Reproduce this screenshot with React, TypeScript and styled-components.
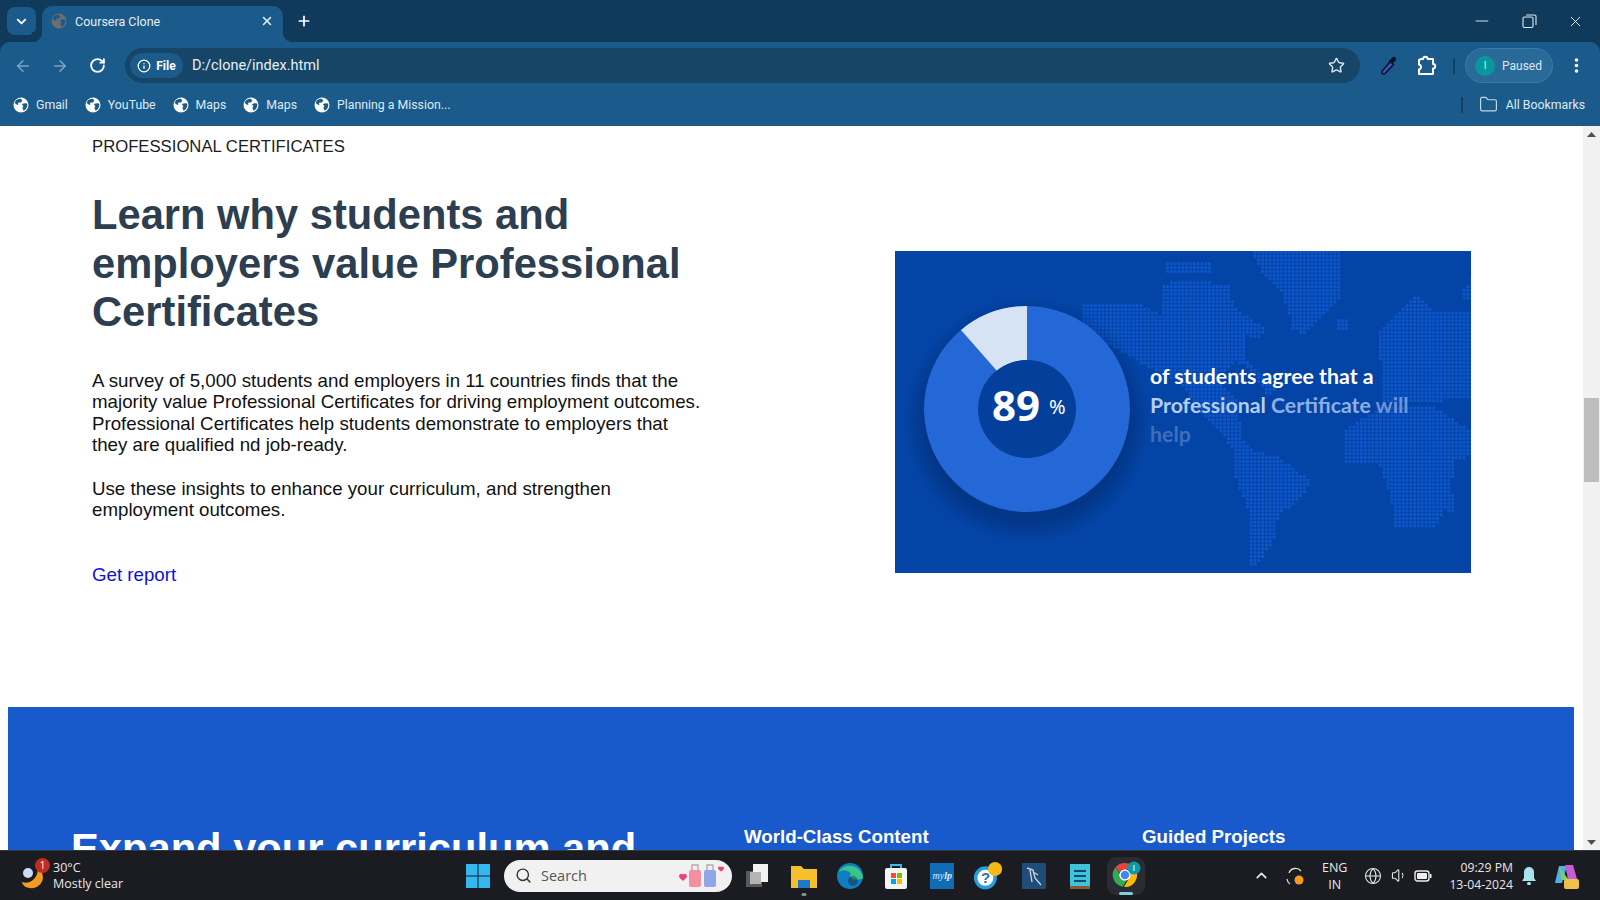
import { createGlobalStyle, styled } from "styled-components";
import { ArrowLeft, ArrowRight, ChevronDown, ChevronUp, EllipsisVertical, Folder, Globe, Info, Minus, Plus, RotateCw, Search, Star, Volume1, X } from "lucide-react";

const uiFont = `"Roboto", "Liberation Sans", sans-serif`;

const Global = createGlobalStyle`
  html, body { margin: 0; height: 100%; overflow: hidden; background: #fff; }
  body { font-family: "Liberation Sans", Arial, sans-serif; }
`;

const Screen = styled.div`
  width: 1600px;
  height: 900px;
  display: flex;
  flex-direction: column;
  overflow: hidden;
  background: #0f3a5c;
`;

const TabStrip = styled.div`
  height: 42px;
  flex: none;
  background: #0f3a5c;
  display: flex;
  align-items: flex-end;
  padding-left: 7px;
  color: #fff;
`;

const TabMenu = styled.div`
  width: 29px;
  height: 28px;
  margin-bottom: 7px;
  border-radius: 8px;
  background: #1a5b8c;
  display: flex;
  align-items: center;
  justify-content: center;
`;

const Tab = styled.div`
  position: relative;
  width: 241px;
  height: 36px;
  margin-left: 6px;
  border-radius: 10px 10px 0 0;
  background: #1a5b8c;
  display: flex;
  align-items: center;
  padding: 0 9px 6px 9px;
  box-sizing: border-box;
  font: 12.5px ${uiFont};
  color: #e6eef5;

  &::before,
  &::after {
    content: "";
    position: absolute;
    bottom: 0;
    width: 10px;
    height: 10px;
  }
  &::before {
    left: -10px;
    background: radial-gradient(circle at 0 0, #0f3a5c 10px, #1a5b8c 10.5px);
  }
  &::after {
    right: -10px;
    background: radial-gradient(circle at 100% 0, #0f3a5c 10px, #1a5b8c 10.5px);
  }
`;

const TabTitle = styled.span`
  flex: 1;
  margin-left: 8px;
`;

const NewTab = styled.div`
  margin: 0 0 13px 13px;
  display: flex;
`;

const WindowButtons = styled.div`
  margin-left: auto;
  margin-bottom: 11px;
  display: flex;
  align-items: center;
  gap: 30px;
  padding-right: 16px;
`;

const Toolbar = styled.div`
  height: 47px;
  flex: none;
  background: #1a5b8c;
  border-radius: 10px 10px 0 0;
  display: flex;
  align-items: center;
  padding-left: 14px;
  color: #fff;
`;

const NavIcon = styled.span<{ $dim?: boolean }>`
  display: flex;
  justify-content: center;
  width: 18px;
  margin-right: 19px;
  color: ${(p) => (p.$dim ? "#7da3c0" : "#fff")};
`;

const Omnibox = styled.div`
  width: 1235px;
  height: 35px;
  border-radius: 18px;
  background: #174567;
  display: flex;
  align-items: center;
  padding: 0 15px 0 5px;
  box-sizing: border-box;
`;

const FileChip = styled.div`
  height: 25px;
  width: 53px;
  border-radius: 13px;
  background: #1a5b8c;
  display: flex;
  align-items: center;
  justify-content: center;
  gap: 5px;
  font: 700 12px ${uiFont};
`;

const Url = styled.span`
  flex: 1;
  margin-left: 9px;
  font: 14.5px ${uiFont};
  color: #e8f0f6;
`;

const ToolGroup = styled.div`
  display: flex;
  align-items: center;
  flex: 1;
`;

const Dropper = styled.svg`
  margin-left: 17px;
`;

const PuzzleIcon = styled.svg`
  margin-left: 12px;
  margin-right: 16px;
`;

const Divider = styled.span`
  width: 2px;
  height: 16px;
  background: #12405f;
`;

const Profile = styled.div`
  width: 88px;
  height: 35px;
  margin-left: 10px;
  border-radius: 18px;
  border: 1px solid #3b7aa6;
  background: #2a6a99;
  box-sizing: border-box;
  display: flex;
  align-items: center;
  padding-left: 9px;
  gap: 7px;
  font: 12px ${uiFont};
  color: #dbe8f2;
`;

const Avatar = styled.span`
  width: 20px;
  height: 20px;
  border-radius: 50%;
  background: #08979c;
  display: flex;
  align-items: center;
  justify-content: center;
  font-size: 10px;
`;

const MenuDots = styled.span`
  display: flex;
  margin-left: 14px;
`;

const BookmarkBar = styled.div`
  height: 37px;
  flex: none;
  background: #1a5b8c;
  display: flex;
  align-items: center;
  padding: 0 15px 6px 13px;
  box-sizing: border-box;
  font: 12.3px ${uiFont};
  color: #dfeaf3;
`;

const Bookmark = styled.span`
  display: flex;
  align-items: center;
  gap: 7px;
  margin-right: 17px;
`;

const BookmarkEnd = styled.span`
  margin-left: auto;
  display: flex;
  align-items: center;
  gap: 8px;
`;

const EndDivider = styled(Divider)`
  margin-right: 8px;
`;

const Viewport = styled.div`
  flex: 1;
  min-height: 0;
  display: flex;
  overflow: hidden;
  background: #fff;
`;

const Page = styled.div`
  flex: 1;
  min-width: 0;
  overflow: hidden;
`;

const Scrollbar = styled.div`
  width: 17px;
  flex: none;
  background: #f1f1f1;
  display: flex;
  flex-direction: column;
  align-items: center;
`;

const ScrollThumb = styled.div`
  width: 15px;
  height: 84px;
  margin-top: 256px;
  background: #bdbdbd;
`;

const ScrollStart = styled.div`
  display: flex;
  height: 16px;
  align-items: center;
`;

const ScrollEnd = styled(ScrollStart)`
  margin-top: auto;
`;

const Section = styled.section`
  height: 581px;
  padding: 9px 0 0 92px;
  box-sizing: border-box;
  display: flex;
  gap: 191px;
`;

const Copyblock = styled.div`
  width: 612px;
`;

const Eyebrow = styled.div`
  font-size: 16.7px;
  line-height: 24px;
  color: #1c1c1c;
`;

const Heading = styled.h2`
  margin: 32px 0 0;
  font-size: 41.7px;
  line-height: 48.5px;
  font-weight: 700;
  color: #2c3e50;
`;

const Body = styled.p`
  margin: 0;
  font-size: 18.72px;
  line-height: 21.6px;
  color: #111;
`;

const Intro = styled(Body)`
  margin-top: 33px;
`;

const Insights = styled(Body)`
  margin-top: 22px;
`;

const ReportLink = styled.a`
  display: block;
  margin-top: 42px;
  font-size: 18.72px;
  line-height: 24px;
  color: #1010d8;
`;

const Promo = styled.div`
  width: 576px;
  height: 322px;
  margin-top: 116px;
  flex: none;
`;

const Band = styled.section`
  margin-left: 8px;
  width: 1566px;
  height: 300px;
  background: #185acb;
  color: #fff;
  display: grid;
  grid-template-columns: 673px 398px 1fr;
  padding: 120px 0 0 63px;
  box-sizing: border-box;
`;

const BandTitle = styled.h2`
  margin: -2px 0 0;
  font-size: 41.7px;
  line-height: 48px;
  font-weight: 700;
`;

const BandLabel = styled.h3`
  margin: -2px 0 0;
  font-size: 18.72px;
  line-height: 24px;
  font-weight: 700;
`;

const Taskbar = styled.div`
  height: 50px;
  flex: none;
  background: #1b1c22;
  border-top: 1px solid #34363c;
  box-sizing: border-box;
  display: grid;
  grid-template-columns: 1fr auto 1fr;
  align-items: center;
  padding: 0 20px 0 20px;
  color: #e8e8e8;
  font: 12.5px "Open Sans", sans-serif;
`;

const Weather = styled.div`
  display: flex;
  align-items: center;
  gap: 7px;
  line-height: 16px;
`;

const WeatherBadge = styled.span`
  position: absolute;
  top: -4px;
  right: -4px;
  width: 15px;
  height: 15px;
  border-radius: 50%;
  background: #c42b1c;
  color: #fff;
  font-size: 10px;
  line-height: 15px;
  text-align: center;
`;

const WeatherIcon = styled.span`
  position: relative;
  display: flex;
`;

const TaskCenter = styled.div`
  display: flex;
  align-items: center;
  gap: 16px;
  padding: 0 2px 0 8px;
`;

const TaskSearch = styled.div`
  width: 228px;
  height: 32px;
  border-radius: 16px;
  background: #f1f1f1;
  color: #333;
  display: flex;
  align-items: center;
  gap: 9px;
  padding: 0 8px 0 11px;
  box-sizing: border-box;
  font-size: 14.5px;
  margin: 0 -5px 0 -3px;
`;

const SearchLabel = styled.span`
  flex: 1;
  color: #555;
`;

const TaskApp = styled.span<{ $active?: boolean }>`
  position: relative;
  width: 30px;
  height: 30px;
  display: flex;
  align-items: center;
  justify-content: center;
  ${(p) => p.$active && "background: #2b2c32; border-radius: 5px; outline: 4px solid #2b2c32;"}
`;

const AppMarker = styled.span<{ $active?: boolean }>`
  position: absolute;
  bottom: ${(p) => (p.$active ? "-4px" : "-5px")};
  left: 50%;
  transform: translateX(-50%);
  width: ${(p) => (p.$active ? "14px" : "5px")};
  height: 3px;
  border-radius: 2px;
  background: ${(p) => (p.$active ? "#7fd2dc" : "#8b8b8b")};
`;

const Tray = styled.div`
  justify-self: end;
  display: flex;
  align-items: center;
`;

const TrayItem = styled.span<{ $gap: number }>`
  display: flex;
  margin-left: ${(p) => p.$gap}px;
`;

const TrayText = styled.span<{ $gap: number }>`
  margin-left: ${(p) => p.$gap}px;
  text-align: center;
  line-height: 17px;
  font-size: 12.5px;
`;

const Clock = styled(TrayText)`
  text-align: right;
  font-size: 12.2px;
`;

const GlobeMark = ({ color = "#fff", hole = "#1a5b8c" }: { color?: string; hole?: string }) => (
  <svg width="16" height="16" viewBox="0 0 16 16">
    <circle cx="8" cy="8" r="7.5" fill={color} />
    <path d="M3 3.2C4.2 2.2 6 1.6 7.6 1.7L9.4 3.4 7.8 5.4 5 5.8 5.4 8 3.6 7.4 1.8 6C2 5 2.4 4 3 3.2z" fill={hole} />
    <path d="M14.2 6.4C14.6 8.6 14 10.8 12.4 12.4L10.6 13.8 9.4 11 10.4 9 8.8 7.6 11 6.2z" fill={hole} />
  </svg>
);

const ScrollArrow = ({ up }: { up?: boolean }) => (
  <svg width="9" height="5" viewBox="0 0 9 5">
    <path d={up ? "M0 5L4.5 0 9 5z" : "M0 0L4.5 5 9 0z"} fill="#505050" />
  </svg>
);

const bookmarks = ["Gmail", "YouTube", "Maps", "Maps", "Planning a Mission..."];

type Pt = [number, number];

// continents, traced in promo pixels * 3 around the right half of the card
const continents: Pt[][] = [
  [[-60, 160], [100, 155], [175, 190], [175, 100], [240, 85], [380, 100], [395, 170], [490, 230], [470, 260], [430, 250], [430, 320], [520, 410], [500, 440], [440, 350], [400, 330], [340, 380], [400, 440], [420, 560], [460, 610], [400, 600], [340, 530], [280, 470], [240, 400], [-60, 240]],
  [[190, 30], [330, 30], [330, 70], [190, 70]],
  [[450, 0], [710, 0], [710, 140], [600, 250], [570, 230], [540, 120], [480, 60]],
  [[700, 210], [735, 200], [735, 235], [700, 235]],
  [[400, 600], [520, 610], [630, 690], [590, 750], [530, 790], [510, 880], [470, 930], [440, 950], [440, 780], [400, 680]],
  [[730, 530], [840, 470], [1000, 470], [1110, 540], [1110, 610], [1060, 630], [1040, 750], [1000, 830], [880, 830], [860, 720], [830, 640], [730, 630]],
  [[840, 450], [830, 240], [940, 130], [1000, 180], [1110, 180], [1110, 440], [1000, 450]],
  [[1040, 730], [1055, 730], [1055, 785], [1035, 785]],
  [[1075, 120], [1110, 80], [1110, 150], [1075, 150]],
];

const inside = (x: number, y: number, poly: Pt[]) => {
  let hit = false;
  for (let i = 0, j = poly.length - 1; i < poly.length; j = i++) {
    const [xi, yi] = poly[i];
    const [xj, yj] = poly[j];
    if (yi > y !== yj > y && x < ((xj - xi) * (y - yi)) / (yj - yi) + xi) hit = !hit;
  }
  return hit;
};

const mapDots: Pt[] = [];
for (let x = 180; x < 576; x += 3.8) {
  for (let y = 0; y < 322; y += 3.8) {
    const px = (x - 206) * 3;
    const py = (y + 1) * 3;
    if (continents.some((c) => inside(px, py, c))) mapDots.push([x, y]);
  }
}

const PromoGraphic = () => (
  <svg width="576" height="322" viewBox="0 0 576 322">
    <defs>
      <radialGradient id="shade" cx="0.5" cy="0.5" r="0.5">
        <stop offset="0.8" stopColor="#00245f" stopOpacity="0.45" />
        <stop offset="1" stopColor="#00245f" stopOpacity="0" />
      </radialGradient>
    </defs>
    <rect width="576" height="322" fill="#0444a7" />
    <g fill="#0e56ca">
      {mapDots.map(([x, y]) => (
        <rect key={`${x}-${y}`} x={x} y={y} width={2.8} height={2.8} />
      ))}
    </g>
    <circle cx="132" cy="169" r="124" fill="url(#shade)" />
    <circle cx="132" cy="158" r="103" fill="#2368d6" />
    <path d="M132 55 L132 109 A49 49 0 0 0 102 120 L66 79 A103 103 0 0 1 132 55Z" fill="#d5e3f4" />
    <circle cx="132" cy="158" r="49" fill="#053f9c" />
    <text x="97" y="170" fill="#fff" fontFamily="Noto Sans" fontWeight="700" fontSize="42">89</text>
    <text x="154" y="163" fill="#fff" fontFamily="Noto Sans" fontSize="20">%</text>
    <g fontFamily="Lato" fontWeight="700" fontSize="21.3">
      <text x="255" y="133" fill="#fff">of students agree that a</text>
      <text x="255" y="162" fill="#b4cdf0">
        Professional <tspan fill="#8cafe6">Certificate</tspan> <tspan fill="#6d95d8">will</tspan>
      </text>
      <text x="255" y="191" fill="#3f6fbb">help</text>
    </g>
  </svg>
);

const TaskIcon = ({ name }: { name: string }) => {
  switch (name) {
    case "start":
      return (
        <svg width="26" height="26" viewBox="0 0 26 26">
          <path d="M1 1h11.5v11.5H1zM13.5 1H25v11.5H13.5zM1 13.5h11.5V25H1zM13.5 13.5H25V25H13.5z" fill="#35b8f0" />
        </svg>
      );
    case "files":
      return (
        <svg width="28" height="28" viewBox="0 0 28 28">
          <path d="M1 4h10l3 3h13v19H1z" fill="#f5c02c" />
          <rect x="8" y="18" width="12" height="8" fill="#1e79c8" />
        </svg>
      );
    case "edge":
      return (
        <svg width="28" height="28" viewBox="0 0 28 28">
          <circle cx="14" cy="14" r="13" fill="#0f7ec2" />
          <path d="M3 10C7 1 25 1 27 16c-5 3-12 2-13-2 3-4-6-8-11-4z" fill="#39c48a" />
          <circle cx="17" cy="19" r="5" fill="#1b1c22" opacity="0.4" />
        </svg>
      );
    case "store":
      return (
        <svg width="26" height="28" viewBox="0 0 26 28">
          <path d="M8 6V3h10v3" fill="none" stroke="#4ab3e8" strokeWidth="2" />
          <rect x="2" y="6" width="22" height="21" rx="2" fill="#f4f4f4" />
          <path d="M8 11h5v5H8z" fill="#f25022" />
          <path d="M14 11h5v5h-5z" fill="#7fba00" />
          <path d="M8 17h5v5H8z" fill="#00a4ef" />
          <path d="M14 17h5v5h-5z" fill="#ffb900" />
        </svg>
      );
    case "mylp":
      return (
        <svg width="26" height="28" viewBox="0 0 26 28">
          <rect x="1" y="1" width="24" height="26" fill="#0f6cb5" />
          <text x="3.5" y="17" fontFamily="Liberation Serif" fontStyle="italic" fill="#d8eefc" fontSize="10">my<tspan fontWeight="700">lp</tspan></text>
        </svg>
      );
    case "help":
      return (
        <svg width="34" height="34" viewBox="0 0 34 34">
          <circle cx="14" cy="19" r="13" fill="#2b9be0" />
          <circle cx="14" cy="19" r="9" fill="#fff" />
          <text x="9" y="25" fontFamily="Liberation Sans" fontWeight="700" fontSize="17" fill="#1d75b8">?</text>
          <circle cx="25" cy="9" r="8" fill="#f7b918" />
        </svg>
      );
    case "mysql":
      return (
        <svg width="26" height="28" viewBox="0 0 26 28">
          <rect x="1" y="1" width="24" height="26" rx="1" fill="#1d4d78" />
          <path d="M6 6l6 2 2 8 6 7M9 8l2 12M12 10l5 3" fill="none" stroke="#c7d3de" strokeWidth="1.4" />
        </svg>
      );
    case "notes":
      return (
        <svg width="24" height="28" viewBox="0 0 24 28">
          <rect x="2" y="2" width="20" height="25" fill="#3ec3da" />
          <rect x="2" y="24" width="20" height="3" fill="#8a5a33" />
          <path d="M6 9h12M6 14h12M6 19h12" stroke="#114a6e" strokeWidth="2" />
        </svg>
      );
    default:
      return (
        <svg width="30" height="30" viewBox="0 0 30 30">
          <path d="M14 2a12 12 0 0 1 10.4 6H14a6 6 0 0 0-5.6 3.8L4.6 6.2A12 12 0 0 1 14 2z" fill="#e8453c" />
          <path d="M4.6 6.2l5.3 9.2a6 6 0 0 0 5.5 4.4L11.7 25.8A12 12 0 0 1 4.6 6.2z" fill="#34a853" />
          <path d="M24.4 8A12 12 0 0 1 13 26l5.2-9A6 6 0 0 0 19 10z" fill="#fbbc05" />
          <circle cx="14" cy="14" r="5" fill="#4285f4" stroke="#fff" strokeWidth="1.5" />
          <circle cx="23" cy="7" r="6.5" fill="#0c9aa6" />
          <rect x="22.5" y="4" width="1" height="6" fill="#fff" />
        </svg>
      );
  }
};

const App = () => (
  <Screen>
    <Global />
    <TabStrip>
      <TabMenu><ChevronDown size={15} strokeWidth={3} /></TabMenu>
      <Tab>
        <GlobeMark color="#6f6d70" />
        <TabTitle>Coursera Clone</TabTitle>
        <X size={14} strokeWidth={2.6} />
      </Tab>
      <NewTab><Plus size={16} strokeWidth={2.6} /></NewTab>
      <WindowButtons>
        <Minus size={20} strokeWidth={1} />
        <svg width="15" height="16" viewBox="0 0 15 16" fill="none" stroke="#dfe8ef" strokeWidth="1.1">
          <rect x="1" y="4" width="10" height="10.5" rx="1.5" />
          <path d="M4 2h8.5A1.5 1.5 0 0 1 14 3.5V12" />
        </svg>
        <X size={17} strokeWidth={1.2} />
      </WindowButtons>
    </TabStrip>
    <Toolbar>
      <NavIcon $dim><ArrowLeft size={18} /></NavIcon>
      <NavIcon $dim><ArrowRight size={18} /></NavIcon>
      <NavIcon><RotateCw size={17} strokeWidth={2.6} /></NavIcon>
      <Omnibox>
        <FileChip><Info size={14} strokeWidth={2.2} />File</FileChip>
        <Url>D:/clone/index.html</Url>
        <Star size={17} color="#dbe6ee" strokeWidth={2} />
      </Omnibox>
      <ToolGroup>
        <Dropper width="24" height="24" viewBox="0 0 24 24">
          <path d="M13.5 7.5l3 3-8 8.5c-1 1-2.4 1.3-3.2.5s-.6-2 .4-3z" fill="#4a4fc6" stroke="#07142c" strokeWidth="1.6" />
          <path d="M11.5 6.5l2-1 1.6-2c1-1 2.6-.8 3.4 0s1 2.4 0 3.4l-2 1.6-1 2z" fill="#07142c" />
        </Dropper>
        <PuzzleIcon width="24" height="24" viewBox="0 0 24 24">
          <path d="M8 5h2.2a2.2 2.2 0 0 1 4.4 0H20v5a2 2 0 0 1 0 4.4V20H6v-4.5a2.6 2.6 0 0 0 2-2.5 2.6 2.6 0 0 0-2-2.5V6z" fill="none" stroke="#fff" strokeWidth="2" strokeLinejoin="round" />
        </PuzzleIcon>
        <Divider />
        <Profile><Avatar>I</Avatar>Paused</Profile>
        <MenuDots><EllipsisVertical size={19} strokeWidth={2.6} /></MenuDots>
      </ToolGroup>
    </Toolbar>
    <BookmarkBar>
      {bookmarks.map((b, i) => (
        <Bookmark key={i}><GlobeMark />{b}</Bookmark>
      ))}
      <BookmarkEnd>
        <EndDivider />
        <Folder size={19} color="#c4d6e4" strokeWidth={1.5} />
        {"All Bookmarks"}
      </BookmarkEnd>
    </BookmarkBar>
    <Viewport>
      <Page>
        <Section>
          <Copyblock>
            <Eyebrow>PROFESSIONAL CERTIFICATES</Eyebrow>
            <Heading>Learn why students and employers value Professional Certificates</Heading>
            <Intro>
              A survey of 5,000 students and employers in 11 countries finds that the majority value Professional Certificates for driving employment outcomes. Professional Certificates help students demonstrate to employers that they are qualified nd job-ready.
            </Intro>
            <Insights>Use these insights to enhance your curriculum, and strengthen employment outcomes.</Insights>
            <ReportLink>Get report</ReportLink>
          </Copyblock>
          <Promo><PromoGraphic /></Promo>
        </Section>
        <Band>
          <BandTitle>Expand your curriculum and</BandTitle>
          <BandLabel>World-Class Content</BandLabel>
          <BandLabel>Guided Projects</BandLabel>
        </Band>
      </Page>
      <Scrollbar>
        <ScrollStart><ScrollArrow up /></ScrollStart>
        <ScrollThumb />
        <ScrollEnd><ScrollArrow /></ScrollEnd>
      </Scrollbar>
    </Viewport>
    <Taskbar>
      <Weather>
        <WeatherIcon>
          <svg width="26" height="28" viewBox="0 0 26 28">
            <path d="M18 6a11 11 0 0 1-8 20C5 26 2 22 2 20c7 3 16-3 16-14z" fill="#f59a23" />
            <circle cx="8" cy="11" r="5" fill="#c9dcf2" />
          </svg>
          <WeatherBadge>1</WeatherBadge>
        </WeatherIcon>
        <div>30°C<br />Mostly clear</div>
      </Weather>
      <TaskCenter>
        <TaskIcon name="start" />
        <TaskSearch>
          <Search size={17} strokeWidth={2} />
          <SearchLabel>Search</SearchLabel>
          <svg width="46" height="28" viewBox="0 0 46 28">
            <path d="M1 14a2.4 2.4 0 0 1 4-1.5A2.4 2.4 0 0 1 9 14c0 2-2.5 3.5-4 5-1.5-1.5-4-3-4-5z" fill="#e8447a" />
            <path d="M14 8V3h6v5M29 8V3h6v5" fill="none" stroke="#b9a8b0" strokeWidth="1.4" />
            <rect x="11" y="8" width="12" height="17" rx="2" fill="#f28fa0" />
            <rect x="26" y="8" width="12" height="17" rx="2" fill="#8fa6e8" />
            <path d="M40 6a1.8 1.8 0 0 1 3-1 1.8 1.8 0 0 1 3 1c0 1.5-1.8 2.500-3 3.500-1.200-1-3-2-3-3.500z" fill="#e8447a" />
          </svg>
        </TaskSearch>
        <TaskApp>
          <svg width="26" height="26" viewBox="0 0 26 26">
            <rect x="1" y="8" width="16" height="16" fill="#5a5a5a" />
            <rect x="8" y="1" width="15" height="18" fill="#f2f2f2" />
            <rect x="5" y="9" width="11" height="12" fill="#b4b4b4" />
          </svg>
        </TaskApp>
        <TaskApp><TaskIcon name="files" /><AppMarker /></TaskApp>
        <TaskApp><TaskIcon name="edge" /></TaskApp>
        <TaskApp><TaskIcon name="store" /></TaskApp>
        <TaskApp><TaskIcon name="mylp" /></TaskApp>
        <TaskApp><TaskIcon name="help" /></TaskApp>
        <TaskApp><TaskIcon name="mysql" /></TaskApp>
        <TaskApp><TaskIcon name="notes" /></TaskApp>
        <TaskApp $active><TaskIcon name="chrome" /><AppMarker $active /></TaskApp>
      </TaskCenter>
      <Tray>
        <ChevronUp size={17} strokeWidth={2.4} />
        <TrayItem $gap={14}>
          <svg width="22" height="22" viewBox="0 0 22 22">
            <path d="M5 8a7 7 0 0 1 12-2M6 19a7 7 0 0 1-3-5" fill="none" stroke="#ddd" strokeWidth="1.3" />
            <circle cx="15" cy="15" r="4.5" fill="#f59a23" />
          </svg>
        </TrayItem>
        <TrayText $gap={16}>ENG<br />IN</TrayText>
        <TrayItem $gap={17}><Globe size={18} strokeWidth={1.4} /></TrayItem>
        <TrayItem $gap={9}><Volume1 size={17} strokeWidth={1.5} /></TrayItem>
        <TrayItem $gap={6}>
          <svg width="18" height="14" viewBox="0 0 18 14">
            <rect x="1" y="2" width="14" height="10" rx="2.5" fill="none" stroke="#eee" strokeWidth="1.4" />
            <rect x="3" y="4" width="10" height="6" rx="1" fill="#eee" />
            <rect x="16" y="5" width="1.5" height="4" fill="#eee" />
          </svg>
        </TrayItem>
        <Clock $gap={17}>09:29 PM<br />13-04-2024</Clock>
        <TrayItem $gap={8}>
          <svg width="16" height="20" viewBox="0 0 16 20">
            <path d="M8 1a5 5 0 0 1 5 5v6l2 3H1l2-3V6a5 5 0 0 1 5-5z" fill="#a9e3ee" />
            <rect x="6" y="16" width="4" height="3" rx="1.5" fill="#a9e3ee" />
          </svg>
        </TrayItem>
        <TrayItem $gap={15}>
          <svg width="28" height="28" viewBox="0 0 28 28">
            <path d="M7 4h8l-5 17H3z" fill="#4fb1e6" />
            <path d="M13 3h8l4 14h-9z" fill="#c55fd6" />
            <path d="M7 5l3 13h7z" fill="#7ccf6a" />
            <rect x="12" y="17" width="15" height="10" rx="2" fill="#eec24a" />
          </svg>
        </TrayItem>
      </Tray>
    </Taskbar>
  </Screen>
);

export default App;
